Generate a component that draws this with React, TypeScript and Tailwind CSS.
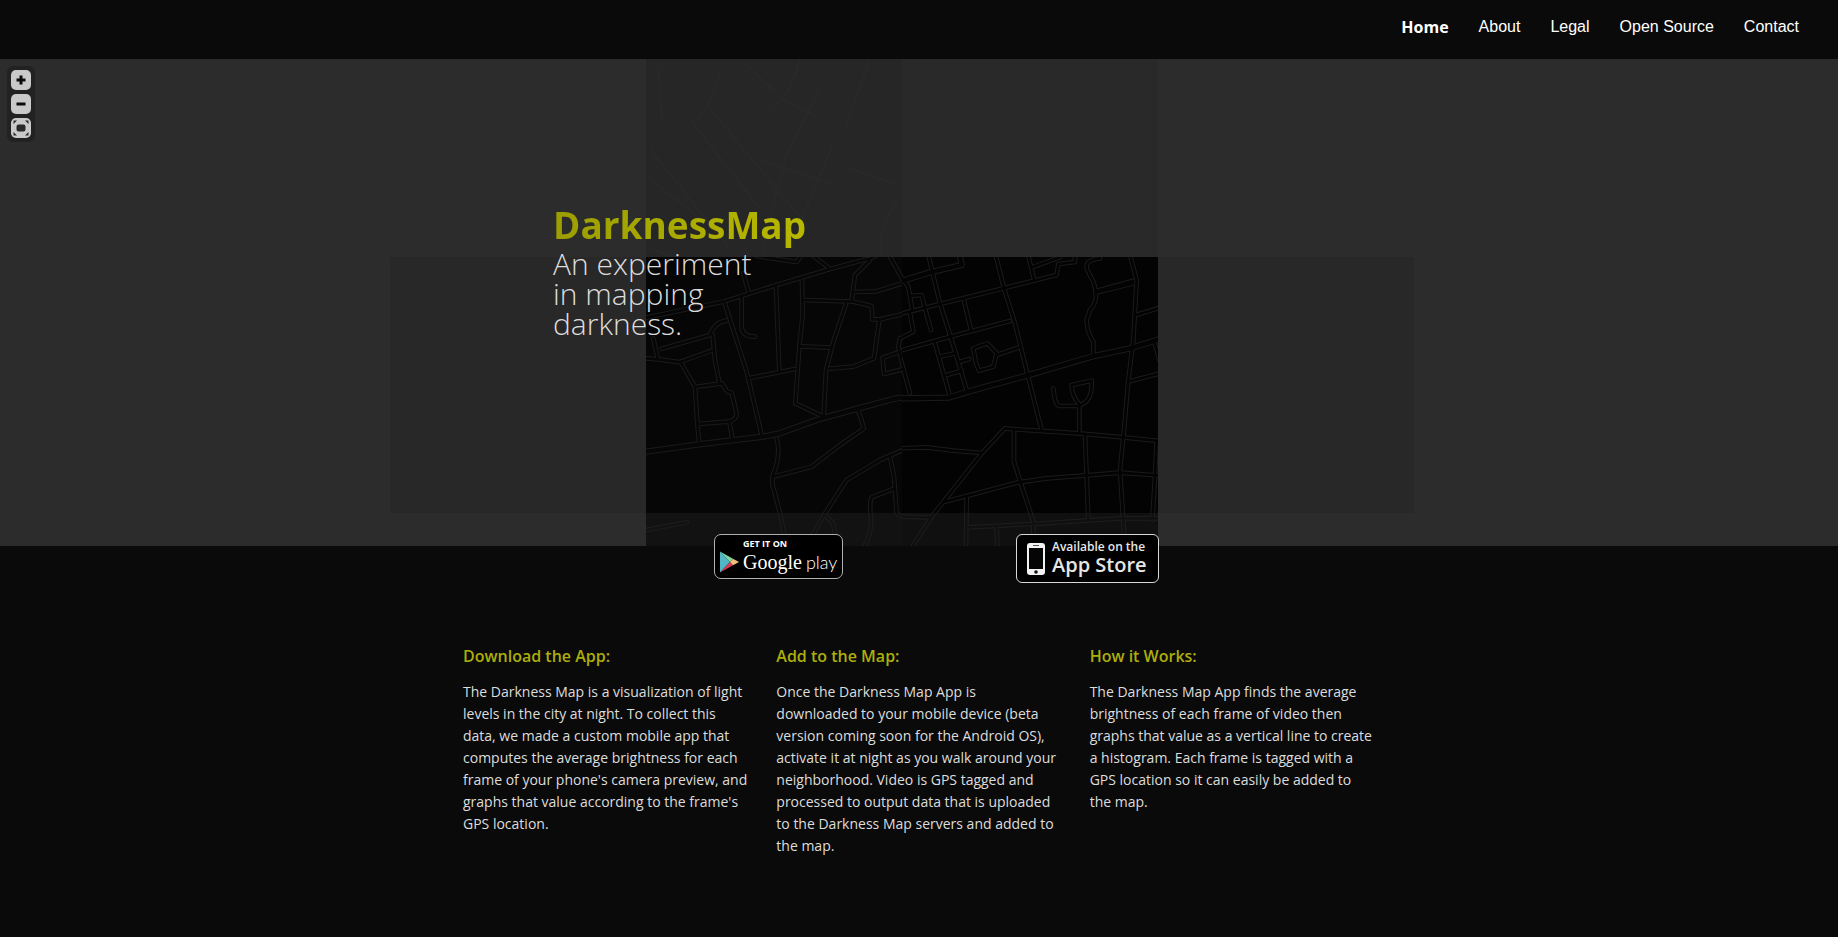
import React from "react";

const navItems = [
  { label: "Home", active: true },
  { label: "About", active: false },
  { label: "Legal", active: false },
  { label: "Open Source", active: false },
  { label: "Contact", active: false },
];

const columns = [
  {
    title: "Download the App:",
    text: "The Darkness Map is a visualization of light levels in the city at night. To collect this data, we made a custom mobile app that computes the average brightness for each frame of your phone's camera preview, and graphs that value according to the frame's GPS location.",
  },
  {
    title: "Add to the Map:",
    text: "Once the Darkness Map App is downloaded to your mobile device (beta version coming soon for the Android OS), activate it at night as you walk around your neighborhood. Video is GPS tagged and processed to output data that is uploaded to the Darkness Map servers and added to the map.",
  },
  {
    title: "How it Works:",
    text: "The Darkness Map App finds the average brightness of each frame of video then graphs that value as a vertical line to create a histogram. Each frame is tagged with a GPS location so it can easily be added to the map.",
  },
];

// Street centre lines, in thirds of a pixel from each sheet's corner.
const westStreets = [
  "M18 203L250 155L400 108L560 60L690 25L780 -15",
  "M18 605L200 580L370 560L420 550L545 505L655 475L760 447L820 437",
  "M350 18L470 36L485 15M520 18L565 52M310 70L325 125",
  "M255 162L320 365L365 555",
  "M305 138L305 230Q306 260 345 260",
  "M408 112L418 365",
  "M325 385L465 357",
  "M486 92L488 195L478 290L466 460L550 500",
  "M690 30L645 75L635 152",
  "M640 126L710 124L810 93",
  "M488 150L640 155L695 168L697 208L720 208L810 188",
  "M618 162L580 275L558 360L551 500",
  "M480 289L575 293",
  "M718 210L702 325L640 350L568 356",
  "M750 20L800 110L812 150",
  "M65 296L210 255Q225 215 260 212",
  "M218 255L225 330L238 398",
  "M18 325L55 328L122 337L165 410L172 520L177 575M40 265L53 325",
  "M122 335L215 302",
  "M165 411L245 400L262 425L275 428L290 490Q290 510 265 515L172 522M268 515L277 565",
  "M655 482L672 535L600 585L515 650L400 680",
  "M410 565Q422 610 405 660Q388 690 405 730L420 790L432 850",
  "M515 860L555 790L620 690L720 630L800 595L830 594",
  "M750 620L762 680L770 790Q775 800 815 800",
  "M760 717L695 742Q687 760 693 800Q695 850 675 885",
  "M555 795L580 820L585 855M18 840L140 817",
  "M810 255L780 265L775 290L810 440M810 295L728 323L732 372L800 355",
];

const eastStreets = [
  "M0 192L120 162L310 115L470 75L475 42L525 36L525 18",
  "M0 95L90 67L185 45L180 18",
  "M85 15L120 160L152 260L200 420",
  "M287 15L312 115L345 220L383 375L425 540",
  "M385 18L403 92M395 52L480 22",
  "M0 302L150 260L330 213",
  "M192 152L213 240",
  "M0 75L25 110L37 180M30 138L65 135L75 175L93 240M30 190L40 245L0 265",
  "M105 280L148 432M120 320L165 310M140 375L185 362M180 335L208 327",
  "M220 295L262 280L290 310L280 350L237 362L228 340ZM290 315L355 293",
  "M0 445L145 443L215 422L383 376L575 320L690 295L780 267",
  "M690 15L710 90L700 270L685 390L672 540L660 660L672 850",
  "M600 25Q550 30 562 60L580 95Q600 150 570 180L560 210Q560 245 580 275L580 312",
  "M588 123L700 92M588 128L700 100M708 195L780 173M692 393L780 370M765 282L778 330",
  "M460 415Q465 470 480 468L540 468M515 405L575 392Q578 455 540 465Q515 440 515 405ZM538 470L538 545",
  "M40 885L95 800L245 610L315 535L345 538L535 550L670 562L780 573",
  "M0 595L80 592L160 602L245 609",
  "M342 540L342 635L400 815L400 850",
  "M135 755L200 738L350 698L440 685L560 676L660 668L780 677",
  "M555 555L560 680L565 810M770 575L765 680L757 810",
  "M200 740L198 885M0 800L95 802M205 832L400 822L660 805L780 805M290 835L292 885",
  "M0 320L30 430",
];

const faintStreets =
  "M268 8L272 60M330 12Q322 45 308 60M320 50L420 170M300 60L370 150M260 90L340 190M410 0Q400 40 380 50M480 0L455 70M430 30L395 100L375 180L370 230M445 80L420 140L400 190M260 120L330 175M262 190L350 222M370 100L440 125M460 110L505 125M510 140Q485 170 492 198M350 0L395 42L430 60";

function Roads({ paths, x, fill }: { paths: string[]; x: number; fill: string }) {
  return (
    <g
      transform={`translate(${x} 191) scale(0.33333)`}
      fill="none"
      strokeLinejoin="round"
      strokeLinecap="round"
    >
      {paths.map((d, i) => (
        <path key={`edge-${i}`} d={d} stroke="#1b1b1b" strokeWidth={i === 1 || (x > 400 && i === 10) ? 19 : 14} />
      ))}
      {paths.map((d, i) => (
        <path key={`road-${i}`} d={d} stroke={fill} strokeWidth={i === 1 || (x > 400 && i === 10) ? 13 : 8} />
      ))}
    </g>
  );
}

function MapTiles() {
  return (
    <svg
      className="absolute top-0 left-1/2 -ml-[529px]"
      width="1024"
      height="487"
      viewBox="0 0 1024 487"
      aria-hidden="true"
    >
      <defs>
        <clipPath id="west">
          <rect x="256" y="198" width="256" height="289" />
        </clipPath>
        <clipPath id="east">
          <rect x="512" y="198" width="256" height="289" />
        </clipPath>
      </defs>
      <rect x="256" width="256" height="198" fill="#262626" />
      <rect x="512" width="256" height="198" fill="#292929" />
      <rect y="198" width="256" height="256" fill="#282828" />
      <rect x="768" y="198" width="256" height="256" fill="#282828" />
      <path d={faintStreets} fill="none" stroke="#282828" strokeWidth="3" />
      <rect x="256" y="198" width="256" height="289" fill="#060606" />
      <rect x="512" y="198" width="256" height="289" fill="#030303" />
      <g clipPath="url(#west)">
        <Roads paths={westStreets} x={250} fill="#060606" />
      </g>
      <g clipPath="url(#east)">
        <Roads paths={eastStreets} x={510} fill="#030303" />
      </g>
      <rect x="256" y="454" width="512" height="33" fill="#222222" fillOpacity="0.45" />
    </svg>
  );
}

function MapControls() {
  const button = "block size-5 overflow-hidden rounded-[5px] bg-[#c9c9c9]";
  return (
    <div className="absolute top-[7px] left-[7px] flex flex-col gap-1 rounded-md bg-[#222222] p-1">
      <button type="button" aria-label="Zoom in" className={button}>
        <svg viewBox="0 0 20 20" className="size-5">
          <path d="M10 5.500v9M5.500 10h9" stroke="#0a0a0a" strokeWidth="3" />
        </svg>
      </button>
      <button type="button" aria-label="Zoom out" className={button}>
        <svg viewBox="0 0 20 20" className="size-5">
          <path d="M5.500 10h9" stroke="#0a0a0a" strokeWidth="3" />
        </svg>
      </button>
      <button type="button" aria-label="Full screen" className={button}>
        <svg viewBox="0 0 20 20" className="size-5" fill="#2a2a2a">
          <rect x="5.500" y="6.500" width="9" height="7" rx="2" />
          <path d="M2.500 2.500h3.500L2.500 6zM17.500 2.500v3.500L14 2.500zM2.500 17.500V14L6 17.500zM17.500 17.500H14l3.500-3.500z" />
        </svg>
      </button>
    </div>
  );
}

function GooglePlayBadge() {
  return (
    <a
      href="#google-play"
      className="flex h-[45px] w-[129px] items-end rounded-[7px] border border-[#b0b0b0] bg-black pb-1 pl-1 text-white"
    >
      <svg viewBox="0 0 20 22" className="mb-px h-[22px] w-5 shrink-0" aria-hidden="true">
        <path d="M1 0.500L11 11L1 21.500Z" fill="#4fb8c4" />
        <path d="M1 0.500L14 7.800L11 11Z" fill="#7fd6a0" />
        <path d="M1 21.500L14 14.200L11 11Z" fill="#d93a56" />
        <path d="M14 7.800L20 11L14 14.200L11 11Z" fill="#f2c07a" />
      </svg>
      <span className="ml-1 flex flex-col whitespace-nowrap">
        <span className="font-['Open_Sans'] text-[9px] leading-[12px] font-bold">GET IT ON</span>
        <span className="flex items-baseline gap-1 leading-[24px]">
          <span className="font-['Liberation_Serif'] text-[20px]">Google</span>
          <span className="font-['Lato'] text-[18px] font-light">play</span>
        </span>
      </span>
    </a>
  );
}

function AppStoreBadge() {
  return (
    <a
      href="#app-store"
      className="flex h-[49px] w-[143px] items-center rounded-md border border-[#d8d8d8] bg-black pl-[10px] text-[#e6e6e6]"
    >
      <svg viewBox="0 0 18 32" className="h-8 w-[18px] shrink-0" aria-hidden="true">
        <rect width="18" height="32" rx="3" fill="#f2f2f2" />
        <rect x="2" y="5" width="14" height="21" fill="#050505" />
        <path d="M6 2.500h6" stroke="#555555" />
        <circle cx="9" cy="29" r="1.800" fill="#111111" />
      </svg>
      <span className="ml-[7px] flex flex-col pb-1 font-['Open_Sans'] whitespace-nowrap">
        <span className="text-[12px] leading-[16px] font-semibold">Available on the</span>
        <span className="text-[20px] leading-[20px] font-semibold">App Store</span>
      </span>
    </a>
  );
}

export default function App() {
  return (
    <div className="min-h-screen bg-[#0a0a0a] font-['Open_Sans',sans-serif]">
      <header className="flex h-[59px] items-start justify-end pt-[15px] pr-6">
        <nav className="flex">
          {navItems.map((item) => (
            <a
              key={item.label}
              href="#"
              className={
                item.active
                  ? "px-[15px] text-base leading-6 font-bold text-white"
                  : "px-[15px] font-['Liberation_Sans',sans-serif] text-base leading-6 text-white"
              }
            >
              {item.label}
            </a>
          ))}
        </nav>
      </header>

      <section className="relative h-[487px] overflow-hidden bg-[#2c2c2c]">
        <MapTiles />
        <MapControls />
        <div className="relative mx-auto w-full max-w-[940px] pt-[142px] pl-[104px]">
          <h1 className="w-fit bg-linear-to-r from-[#9c9e00] to-[#b8b800] bg-clip-text text-[37px] leading-[48px] font-bold text-transparent">
            DarknessMap
          </h1>
          <p className="text-[30px] leading-[30px] font-light text-[#dddddd]">
            An experiment
            <br />
            in mapping
            <br />
            darkness.
          </p>
        </div>
      </section>

      <main className="relative mx-auto -mt-3 w-full max-w-[940px] pb-16">
        <div className="flex items-start justify-center gap-[173px] pl-[35px]">
          <GooglePlayBadge />
          <AppStoreBadge />
        </div>
        <div className="mt-[61px] grid grid-cols-3">
          {columns.map((column) => (
            <article key={column.title} className="pr-[15px] pl-[14px]">
              <h2 className="text-base leading-6 font-semibold text-[#acae0c]">{column.title}</h2>
              <p className="mt-[13px] text-sm leading-[22px] text-[#dddddd]">{column.text}</p>
            </article>
          ))}
        </div>
      </main>
    </div>
  );
}
